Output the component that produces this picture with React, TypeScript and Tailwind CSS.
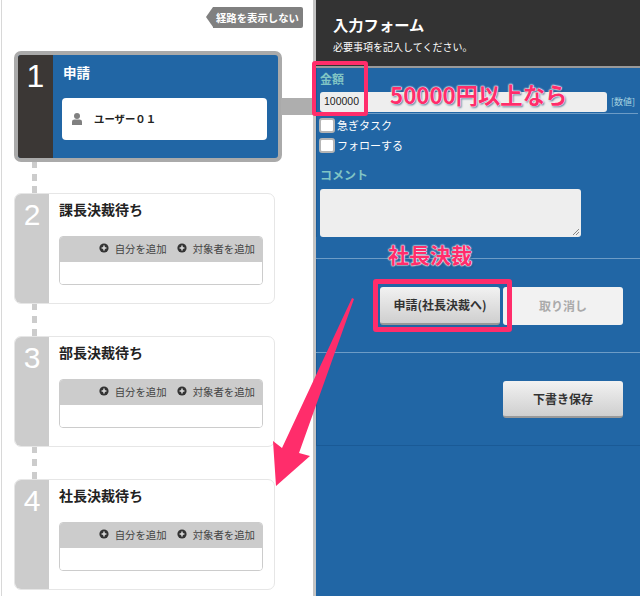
import React from "react";

const font = { fontFamily: '"Noto Sans CJK JP", "Liberation Sans", sans-serif' };

function PlusIcon() {
  return (
    <svg width="10" height="10" viewBox="0 0 10 10" className="shrink-0">
      <circle cx="5" cy="5" r="4.6" fill="#333" />
      <path d="M5 2.6v4.8M2.6 5h4.8" stroke="#ddd" strokeWidth="1.5" />
    </svg>
  );
}

function Dash({ h }: { h: string }) {
  return (
    <div className={`ml-[18px] flex w-[5px] flex-col justify-between ${h}`}>
      <div className="h-[6px] bg-[#cccccc]" />
      <div className="h-[7px] bg-[#cccccc]" />
      <div className="h-[7px] bg-[#cccccc]" />
    </div>
  );
}

function Step({ n, title }: { n: string; title: string }) {
  return (
    <div className="flex h-[111px] w-[261px] overflow-hidden rounded-[7px] border border-[#e6e6e6] bg-white">
      <div className="w-[34px] shrink-0 bg-[#cccccc] text-center text-[30px] leading-[42px] text-white" style={{ fontFamily: '"Liberation Sans", sans-serif' }}>
        {n}
      </div>
      <div className="flex-1 pl-[10px] pr-[11px] pt-[5px]">
        <div className="text-[14px] font-bold leading-[20px] text-[#222]">{title}</div>
        <div className="mt-[17px] overflow-hidden rounded-[4px] border border-[#cccccc]">
          <div className="flex h-[25px] items-center justify-end gap-[10px] bg-[#cccccc] pb-[2px] pr-[7px] text-[10.4px] text-[#444]">
            <span className="flex items-center gap-[6px]"><PlusIcon />自分を追加</span>
            <span className="flex items-center gap-[6px]"><PlusIcon />対象者を追加</span>
          </div>
          <div className="h-[22px] bg-white" />
        </div>
      </div>
    </div>
  );
}

function Check({ label }: { label: string }) {
  return (
    <div className="-ml-px flex h-[20px] items-center gap-[2px] text-[11px] text-white">
      <span className="h-[15px] w-[16px] rounded-[3px] border-2 border-[#b5b5b5] bg-white" />
      {label}
    </div>
  );
}

function Btn({ label, h, muted }: { label: string; h: string; muted?: boolean }) {
  return (
    <div
      className={`flex w-[120px] items-center justify-center rounded-[3px] text-[12px] font-bold ${h} ${
        muted
          ? "bg-[#f2f2f2] text-[#aaa]"
          : "border-b-2 border-[#999] bg-gradient-to-b from-[#f2f2f2] to-[#cfcfcf] text-[#333]"
      }`}
    >
      {label}
    </div>
  );
}

const annot = "absolute font-bold text-[#ff2d6b] [text-shadow:0_0_2px_#fff,0_0_2px_#fff,0_0_1px_#fff,1px_1px_2px_#0b3a66]";

export default function App() {
  return (
    <div className="relative flex h-[596px] w-[640px] overflow-hidden bg-white" style={font}>
      <div className="ml-[1px] h-full w-[312px] shrink-0 border-l border-[#d8d8d8]">
        <div className="flex h-[51px] items-start justify-end pr-[10px] pt-[7px]">
          <div className="relative ml-[8px] flex h-[21px] items-center rounded-r-[2px] bg-[#808080] pl-[3px] pr-[4px] text-[10.4px] font-bold text-white">
            <span className="absolute left-[-7px] top-0 h-0 w-0 border-y-[10.5px] border-r-[7px] border-y-transparent border-r-[#808080]" />
            経路を表示しない
          </div>
        </div>
        <div className="ml-[12px]">
          <div className="flex h-[111px] w-[268px] rounded-[7px] border-[4px] border-[#aaaaaa] bg-[#2166a5]">
            <div className="w-[35px] shrink-0 rounded-l-[3px] bg-[#3b3735] text-center text-[32px] leading-[42px] text-white" style={{ fontFamily: '"Liberation Sans", sans-serif' }}>
              1
            </div>
            <div className="flex-1 pl-[9px] pr-[11px] pt-[7px]">
              <div className="ml-px text-[13.5px] font-bold leading-[20px] text-white">申請</div>
              <div className="mt-[16px] flex h-[42px] items-center gap-[12px] rounded-[4px] bg-white pl-[10px] text-[10.4px] font-bold text-[#222]">
                <svg width="10" height="12" viewBox="0 0 10 12">
                  <circle cx="5" cy="3" r="3" fill="#808080" />
                  <path d="M0 12V8.5Q0 6.5 2.5 6.5h5Q10 6.5 10 8.5V12z" fill="#808080" />
                </svg>
                ユーザー０１
              </div>
            </div>
          </div>
          <Dash h="h-[31px]" />
          <Step n="2" title="課長決裁待ち" />
          <Dash h="h-[32px]" />
          <Step n="3" title="部長決裁待ち" />
          <Dash h="h-[32px]" />
          <Step n="4" title="社長決裁待ち" />
        </div>
      </div>

      <div className="h-full w-[3px] shrink-0 bg-[#c4c4c4]" />

      <div className="flex h-full flex-1 flex-col bg-[#2166a5]">
        <div className="h-[68px] shrink-0 border-b-2 border-[#9a9a9a] bg-[#333333] pl-[17px] pt-[12px] text-white">
          <div className="text-[15.3px] font-bold leading-[24px]">入力フォーム</div>
          <div className="mt-[4px] text-[10px] leading-[14px]">必要事項を記入してください。</div>
        </div>
        <div className="border-l border-[#1a5a96] pl-[3px]">
          <div className="mt-[2px] text-[12px] font-bold leading-[18px] text-[#80c4c4]">金額</div>
          <div className="mt-[4px] flex items-center pb-[1px]">
            <div className="flex h-[20px] w-[287px] items-center rounded-[3px] bg-[#eeeeee] pl-[4px] text-[10.5px] text-[#222]" style={{ fontFamily: '"Liberation Sans", sans-serif' }}>
              100000
            </div>
            <span className="ml-[4px] text-[9px] text-[#a8d4e0]">[数値]</span>
          </div>
          <div className="mr-[2px] h-px bg-[#6d9cc6]" />
          <div className="mt-[1px]">
            <Check label="急ぎタスク" />
            <Check label="フォローする" />
          </div>
          <div className="mt-[11px] text-[12px] font-bold leading-[18px] text-[#80c4c4]">コメント</div>
          <div className="relative mt-[5px] h-[48px] w-[261px] rounded-[3px] bg-[#eeeeee]">
            <svg width="8" height="8" viewBox="0 0 8 8" className="absolute bottom-[1px] right-[1px]">
              <path d="M1 7L7 1M4 7L7 4" stroke="#888" strokeWidth="1" />
            </svg>
          </div>
        </div>
        <div className="mt-[21px] h-px bg-[#6d9cc6]" />
        <div className="flex h-[93px] items-start justify-end gap-[3px] border-l border-[#1a5a96] pr-[17px] pt-[28px]">
          <Btn label="申請(社長決裁へ)" h="h-[38px]" />
          <Btn label="取り消し" h="h-[38px]" muted />
        </div>
        <div className="h-px bg-[#6d9cc6]" />
        <div className="flex h-[92px] items-start justify-end border-l border-[#1a5a96] pr-[17px] pt-[28px]">
          <Btn label="下書き保存" h="h-[37px]" />
        </div>
        <div className="h-px bg-[#1a5a96]" />
      </div>

      {/* connector between active step and form */}
      <div className="absolute left-[281px] top-[98px] h-[17px] w-[32px] bg-[#aeaeae]" />

      {/* annotations */}
      <div className="absolute left-[312px] top-[61px] h-[55px] w-[56px] rounded-[3px] border-[4px] border-[#ff2d6b]" />
      <div className="absolute left-[373px] top-[279px] h-[53px] w-[139px] rounded-[3px] border-[5px] border-[#ff2d6b]" />
      <div className={`${annot} left-[390px] top-[79px] text-[22.3px] leading-[30px]`}>50000円以上なら</div>
      <div className={`${annot} left-[388px] top-[240px] text-[21px] leading-[28px]`}>社長決裁</div>
      <svg className="absolute left-0 top-0" width="640" height="596" viewBox="0 0 640 596">
        <polygon points="352,298 354,299 299,453 310,456 276,486 273,441 282,448" fill="#ff2d6b" />
      </svg>
    </div>
  );
}
